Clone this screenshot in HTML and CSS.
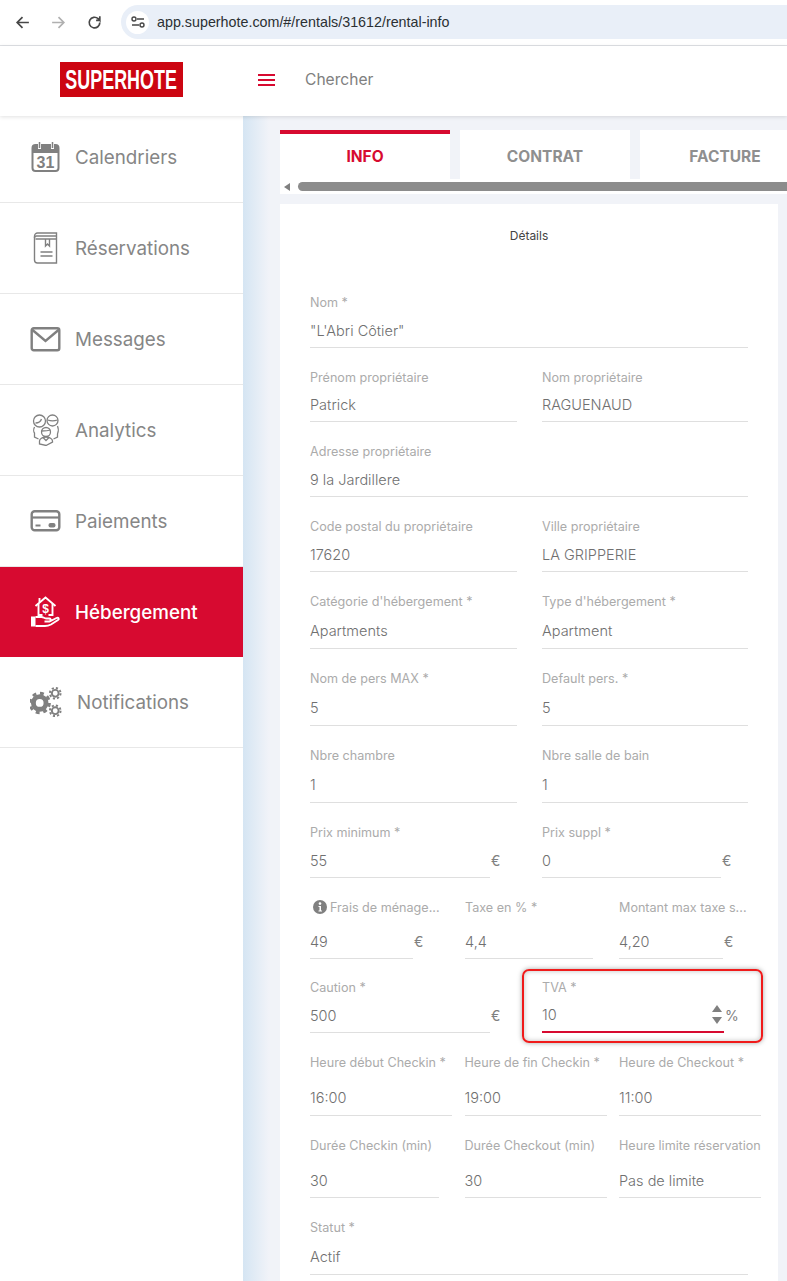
FILE: index.html
```html
<!DOCTYPE html>
<html lang="fr">
<head>
    <meta charset="UTF-8">
    <meta name="viewport" content="width=device-width, initial-scale=1.0">
    <title>Hébergement</title>
    <link rel="stylesheet" href="styles.css">
</head>
<body>

    <!-- Barre du navigateur -->
    <div class="browser">
        <svg class="nav-icon" viewBox="0 0 16 16"><path d="M14 8H3M8 3L3 8l5 5" fill="none" stroke="#474747" stroke-width="1.6"/></svg>
        <svg class="nav-icon" viewBox="0 0 16 16"><path d="M2 8h11M8 3l5 5-5 5" fill="none" stroke="#b0b0b0" stroke-width="1.6"/></svg>
        <svg class="nav-icon" viewBox="0 0 16 16"><path d="M13 8a5 5 0 1 1-1.6-3.6L13 6V2M13 6H9.5" fill="none" stroke="#474747" stroke-width="1.6"/></svg>
        <div class="address">
            <span class="site-btn">
                <svg viewBox="0 0 16 16" width="16" height="16"><path d="M7 5h7M2 11h7" stroke="#474747" stroke-width="1.4"/><circle cx="4" cy="5" r="2" fill="none" stroke="#474747" stroke-width="1.4"/><circle cx="12" cy="11" r="2" fill="none" stroke="#474747" stroke-width="1.4"/></svg>
            </span>
            <span class="url">app.superhote.com/#/rentals/31612/rental-info</span>
        </div>
    </div>

    <!-- En-tête -->
    <header class="topbar">
        <div class="logo-wrap"><div class="logo"><span>SUPERHOTE</span></div></div>
        <div class="burger"><span></span><span></span><span></span></div>
        <div class="search">Chercher</div>
    </header>

    <div class="layout">
        <!-- Menu -->
        <nav class="sidebar">
            <a class="item">
                <svg class="icon" viewBox="0 0 30 32"><rect x="2" y="4" width="26" height="26" rx="3" fill="none" stroke="#808080" stroke-width="2"/><path d="M2 5h26v7H2z" fill="#808080"/><path d="M9 1v7M22 1v7" stroke="#fff" stroke-width="3"/><path d="M9 1v6M22 1v6" stroke="#808080" stroke-width="1.500"/><text x="15" y="27" text-anchor="middle" class="cal-num">31</text></svg>
                <span>Calendriers</span>
            </a>
            <a class="item">
                <svg class="icon" viewBox="0 0 30 32" fill="none" stroke="#808080" stroke-width="1.400"><path d="M7 1h19v30H7a3 3 0 0 1-3-3V4a3 3 0 0 1 3-3z"/><path d="M4 6a2 2 0 0 1 2-2h20M5 7h21"/><path d="M15 7v7l2-2 2 2V7M10 20h12M10 24h12"/></svg>
                <span>Réservations</span>
            </a>
            <a class="item">
                <svg class="icon" viewBox="0 0 30 32"><rect x="1.200" y="5.200" width="27.600" height="22" rx="2" fill="none" stroke="#808080" stroke-width="2.400"/><path d="M2 7l13 11L28 7" fill="none" stroke="#808080" stroke-width="2.400"/></svg>
                <span>Messages</span>
            </a>
            <a class="item">
                <svg class="icon" viewBox="0 0 30 32" fill="none" stroke="#808080" stroke-width="1.300"><circle cx="9" cy="7" r="6"/><circle cx="22" cy="6.500" r="5.500"/><path d="M5 9c3 0 5-1 6-4M17 6c3 1 7 1 10 0"/><path d="M4 13c-1 2-1 5 0 6v4l4 2M27 12c1 2 1 6 0 8v3l-4 2"/><circle cx="15.500" cy="18" r="4.500"/><path d="M11 17c3 0 6 0 9-1"/><path d="M9 30v-3c0-2 3-4 6.500-4s6.500 2 6.500 4v1l-6.500 3.500z"/><path d="M12.500 23.500l3 3 3-3"/></svg>
                <span>Analytics</span>
            </a>
            <a class="item">
                <svg class="icon" viewBox="0 0 30 32"><rect x="1.200" y="6.200" width="27.600" height="19" rx="3" fill="none" stroke="#808080" stroke-width="2.400"/><path d="M1 12.500h28" stroke="#808080" stroke-width="2.200"/><path d="M5 20.500h5" stroke="#808080" stroke-width="2"/><rect x="18" y="18" width="7" height="4.500" rx="2" fill="#808080"/></svg>
                <span>Paiements</span>
            </a>
            <a class="item active">
                <svg class="icon" viewBox="0 0 30 32" fill="none" stroke="#fff" stroke-width="1.900"><path d="M5 10L15 1.500 25 10"/><path d="M8 8v11h4M22 8v11h-4"/><path d="M9 2v4"/><text x="15" y="16.500" text-anchor="middle" class="house-sign">$</text><path d="M5 21h6c2 0 3 1.500 5 1.500h3c1.500 0 1.500 3 0 3h-5 5l7-3.500c2-1 3 1 1.500 2l-7 4.500c-2 1-4 1.500-6 1.500H5"/><path d="M.5 20.500h4.500v10H.5z" fill="#fff" stroke="none"/></svg>
                <span>Hébergement</span>
            </a>
            <a class="item item-notif">
                <svg class="icon icon-gears" viewBox="0 0 34 32" fill="none" stroke="#808080">
                    <circle cx="10" cy="17" r="6.500" stroke-width="5"/>
                    <circle cx="10" cy="17" r="10" stroke-width="3" stroke-dasharray="4 3.850"/>
                    <circle cx="26" cy="7" r="3.500" stroke-width="2"/>
                    <circle cx="26" cy="7" r="5.500" stroke-width="2" stroke-dasharray="2.200 2.120"/>
                    <circle cx="26" cy="25" r="3.500" stroke-width="2"/>
                    <circle cx="26" cy="25" r="5.500" stroke-width="2" stroke-dasharray="2.200 2.120"/>
                </svg>
                <span>Notifications</span>
            </a>
        </nav>

        <main class="content">
            <div class="tabs">
                <div class="tab tab-on">INFO</div>
                <div class="tab">CONTRAT</div>
                <div class="tab">FACTURE</div>
            </div>
            <div class="scrollbar"><i class="arrow"></i><i class="thumb"></i></div>

            <section class="card">
                <h2>Détails</h2>

                <div class="row h-45">
                    <div class="field"><label>Nom *</label><div class="val">"L'Abri Côtier"</div></div>
                </div>
                <div class="row two h-44">
                    <div class="field"><label>Prénom propriétaire</label><div class="val">Patrick</div></div>
                    <div class="field"><label>Nom propriétaire</label><div class="val">RAGUENAUD</div></div>
                </div>
                <div class="row h-45">
                    <div class="field"><label>Adresse propriétaire</label><div class="val">9 la Jardillere</div></div>
                </div>
                <div class="row two h-45">
                    <div class="field"><label>Code postal du propriétaire</label><div class="val">17620</div></div>
                    <div class="field"><label>Ville propriétaire</label><div class="val">LA GRIPPERIE</div></div>
                </div>
                <div class="row two h-47">
                    <div class="field"><label>Catégorie d'hébergement *</label><div class="val">Apartments</div></div>
                    <div class="field"><label>Type d'hébergement *</label><div class="val">Apartment</div></div>
                </div>
                <div class="row two h-47">
                    <div class="field"><label>Nom de pers MAX *</label><div class="val">5</div></div>
                    <div class="field"><label>Default pers. *</label><div class="val">5</div></div>
                </div>
                <div class="row two h-47">
                    <div class="field"><label>Nbre chambre</label><div class="val">1</div></div>
                    <div class="field"><label>Nbre salle de bain</label><div class="val">1</div></div>
                </div>
                <div class="row two h-45">
                    <div class="unit-wrap"><div class="field"><label>Prix minimum *</label><div class="val">55</div></div><span class="unit">€</span></div>
                    <div class="unit-wrap"><div class="field"><label>Prix suppl *</label><div class="val">0</div></div><span class="unit">€</span></div>
                </div>
                <div class="row three h-51">
                    <div class="unit-wrap"><div class="field"><label class="with-info"><svg class="info" viewBox="0 0 14 14"><circle cx="7" cy="7" r="7" fill="#808080"/><circle cx="7" cy="3.600" r="1.300" fill="#fff"/><path d="M5.500 6h2.500v4.500h1v1H5.500v-1h1V7h-1z" fill="#fff"/></svg><span>Frais de ménage...</span></label><div class="val">49</div></div><span class="unit">€</span></div>
                    <div class="field"><label>Taxe en % *</label><div class="val">4,4</div></div>
                    <div class="unit-wrap"><div class="field"><label>Montant max taxe s...</label><div class="val">4,20</div></div><span class="unit">€</span></div>
                </div>
                <div class="row two h-45">
                    <div class="unit-wrap"><div class="field"><label>Caution *</label><div class="val">500</div></div><span class="unit">€</span></div>
                    <div class="unit-wrap focus-wrap">
                        <div class="field field-focus"><label>TVA *</label><div class="val">10<span class="spin"><i class="up"></i><i class="down"></i></span></div></div><span class="unit">%</span>
                        <div class="highlight"></div>
                    </div>
                </div>
                <div class="row times h-53">
                    <div class="field"><label>Heure début Checkin *</label><div class="val">16:00</div></div>
                    <div class="field"><label>Heure de fin Checkin *</label><div class="val">19:00</div></div>
                    <div class="field"><label>Heure de Checkout *</label><div class="val">11:00</div></div>
                </div>
                <div class="row times h-52">
                    <div class="field short"><label>Durée Checkin (min)</label><div class="val">30</div></div>
                    <div class="field"><label>Durée Checkout (min)</label><div class="val">30</div></div>
                    <div class="field"><label>Heure limite réservation</label><div class="val">Pas de limite</div></div>
                </div>
                <div class="row h-47">
                    <div class="field"><label>Statut *</label><div class="val">Actif</div></div>
                </div>
            </section>
        </main>
    </div>

</body>
</html>
```

FILE: styles.css
```css
/* Page */
body {
    margin: 0;
    height: 1281px;
    overflow: hidden;
    font-family: Inter, "Open Sans", sans-serif;
    background-color: #f1f3f8;
    color: #808080;
}

/* Barre du navigateur */
.browser {
    height: 44px;
    padding: 0 0 1px 14px;
    display: flex;
    align-items: center;
    gap: 19px;
    background-color: #fff;
    border-bottom: 1px solid #dfe1e5;
}

.nav-icon {
    width: 17px;
    height: 17px;
    flex: none;
}

.address {
    flex: 1;
    height: 34px;
    margin-left: -1px;
    display: flex;
    align-items: center;
    background-color: #e9eff8;
    border-radius: 17px 0 0 17px;
    padding-left: 5px;
    gap: 8px;
}

.site-btn {
    width: 23px;
    height: 23px;
    border-radius: 50%;
    background-color: #fff;
    display: flex;
    align-items: center;
    justify-content: center;
}

.url {
    font-family: "Liberation Sans", Arial, sans-serif;
    font-size: 14.300px;
    color: #2b2f33;
}

/* En-tête */
.topbar {
    height: 67px;
    padding-bottom: 3px;
    display: flex;
    align-items: center;
    background-color: #fff;
    box-shadow: 0 1px 4px rgba(0, 0, 0, 0.12);
    position: relative;
    z-index: 2;
}

.logo-wrap {
    width: 258px;
    padding-left: 60px;
    box-sizing: border-box;
}

.logo {
    width: 123px;
    height: 35px;
    display: flex;
    align-items: center;
    justify-content: center;
    background-color: #cc0511;
    color: #fff;
    font-family: "Liberation Sans", Arial, sans-serif;
    font-weight: 700;
    font-size: 28px;
}

.logo span {
    display: block;
    flex: none;
    transform: scaleX(0.64);
    white-space: nowrap;
}

.burger {
    width: 17px;
    margin: 1px 30px 0 0;
    display: flex;
    flex-direction: column;
    gap: 3px;
}

.burger span {
    height: 2px;
    background-color: #d70a30;
}

.search {
    font-size: 15.600px;
    color: #808080;
}

/* Layout */
.layout {
    display: flex;
    height: 1165px;
}

.sidebar {
    width: 243px;
    flex: none;
    margin-top: -4px;
    background-color: #fff;
}

.item {
    height: 90px;
    display: flex;
    align-items: center;
    padding-left: 30px;
    gap: 14px;
    border-bottom: 1px solid #e8e8e8;
    font-size: 18.800px;
    color: #868686;
}

.item.active {
    background-color: #d70a30;
    color: #fff;
    border-bottom: 0;
    font-weight: 500;
}

.icon {
    width: 31px;
    height: 32px;
    flex: none;
}

.icon-gears {
    width: 33px;
}

.cal-num {
    font-family: "Liberation Sans", Arial, sans-serif;
    font-size: 16px;
    font-weight: 700;
    fill: #808080;
}

.house-sign {
    font-family: "Liberation Sans", Arial, sans-serif;
    font-size: 12px;
    font-weight: 700;
    fill: #fff;
    stroke: none;
}

/* Contenu */
.content {
    flex: 1;
    min-width: 0;
    padding: 14px 0 0 37px;
    overflow: hidden;
    background: linear-gradient(to right, #d5e5f3, #f1f3f8 26px);
}

.tabs {
    display: flex;
    gap: 10px;
    width: 560px;
    height: 49px;
}

.tab {
    width: 170px;
    flex: none;
    height: 49px;
    line-height: 53px;
    text-align: center;
    background-color: #fff;
    font-size: 15.500px;
    font-weight: 700;
    color: #8f8f8f;
}

.tab-on {
    border-top: 4px solid #d70a30;
    height: 45px;
    line-height: 45px;
    color: #d70a30;
}

.scrollbar {
    height: 15px;
    display: flex;
    align-items: center;
    background-color: #fff;
}

.arrow {
    width: 0;
    height: 0;
    margin-left: 4px;
    border: 4.500px solid transparent;
    border-left: 0;
    border-right: 6px solid #808080;
}

.thumb {
    flex: 1;
    height: 9px;
    margin-left: 8px;
    border-radius: 5px 0 0 5px;
    background-color: #8c8c8c;
}

.card {
    width: 498px;
    height: 1100px;
    margin-top: 10px;
    box-sizing: border-box;
    padding: 0 0 0 30px;
    background-color: #fff;
}

h2 {
    margin: 0;
    padding-top: 24px;
    height: 65px;
    width: 438px;
    font-size: 12px;
    line-height: 16px;
    font-weight: 400;
    text-align: center;
    color: #444;
}

/* Lignes du formulaire */
.row {
    display: grid;
    grid-template-columns: 438px;
    margin-bottom: 20px;
    --val-h: 37px;
    --val-pad: 6px;
}

.two {
    grid-template-columns: 207px 206px;
    column-gap: 25px;
}

.three {
    grid-template-columns: 129px 128px 130px;
    column-gap: 26px;
    margin-bottom: 19px;
}

.times {
    grid-template-columns: 142px 142px 142px;
    column-gap: 12.500px;
}

.h-44 {
    --val-h: 36px;
}

.h-47 {
    --val-h: 39px;
    --val-pad: 7px;
}

.h-51 {
    --val-h: 43px;
}

.h-52 {
    --val-h: 44px;
}

.h-53 {
    --val-h: 45px;
    --val-pad: 7px;
}

.short {
    width: 129px;
}

.field {
    min-width: 0;
}

.field label {
    display: flex;
    align-items: center;
    height: 18px;
    font-size: 12.600px;
    color: #ababab;
    white-space: nowrap;
}

.val {
    height: var(--val-h);
    display: flex;
    align-items: flex-end;
    padding-bottom: var(--val-pad);
    box-sizing: border-box;
    border-bottom: 1px solid #dfdfdf;
    font-size: 14.500px;
    line-height: 20px;
    font-weight: 300;
    color: #707070;
    position: relative;
}

.unit-wrap {
    display: flex;
    align-items: flex-end;
    position: relative;
}

.unit-wrap .field {
    flex: 1;
}

.unit {
    width: 27px;
    flex: none;
    padding: 0 0 7px 1px;
    box-sizing: border-box;
    font-size: 14px;
    line-height: 20px;
    color: #808080;
}

.three .unit {
    width: 26px;
}

.with-info {
    gap: 3px;
    margin-left: 3px;
}

.info {
    width: 14px;
    height: 14px;
    flex: none;
}

/* Champ TVA */
.focus-wrap .unit {
    width: 24px;
}

.field-focus .val {
    border-bottom: 2px solid #d70a30;
}

.spin {
    position: absolute;
    right: 2px;
    top: 9px;
    display: flex;
    flex-direction: column;
    gap: 5px;
}

.spin i {
    width: 0;
    height: 0;
    border: 5px solid transparent;
    border-top: 0;
    border-bottom: 7px solid #808080;
}

.spin .down {
    border-bottom: 0;
    border-top: 7px solid #808080;
}

.highlight {
    position: absolute;
    left: -20px;
    right: -15px;
    top: -9px;
    bottom: -10px;
    border: 2px solid #f01b1b;
    border-radius: 7px;
    box-shadow: 0 0 5px rgba(0, 0, 0, 0.35), inset 0 0 5px rgba(0, 0, 0, 0.25);
    pointer-events: none;
}
```
